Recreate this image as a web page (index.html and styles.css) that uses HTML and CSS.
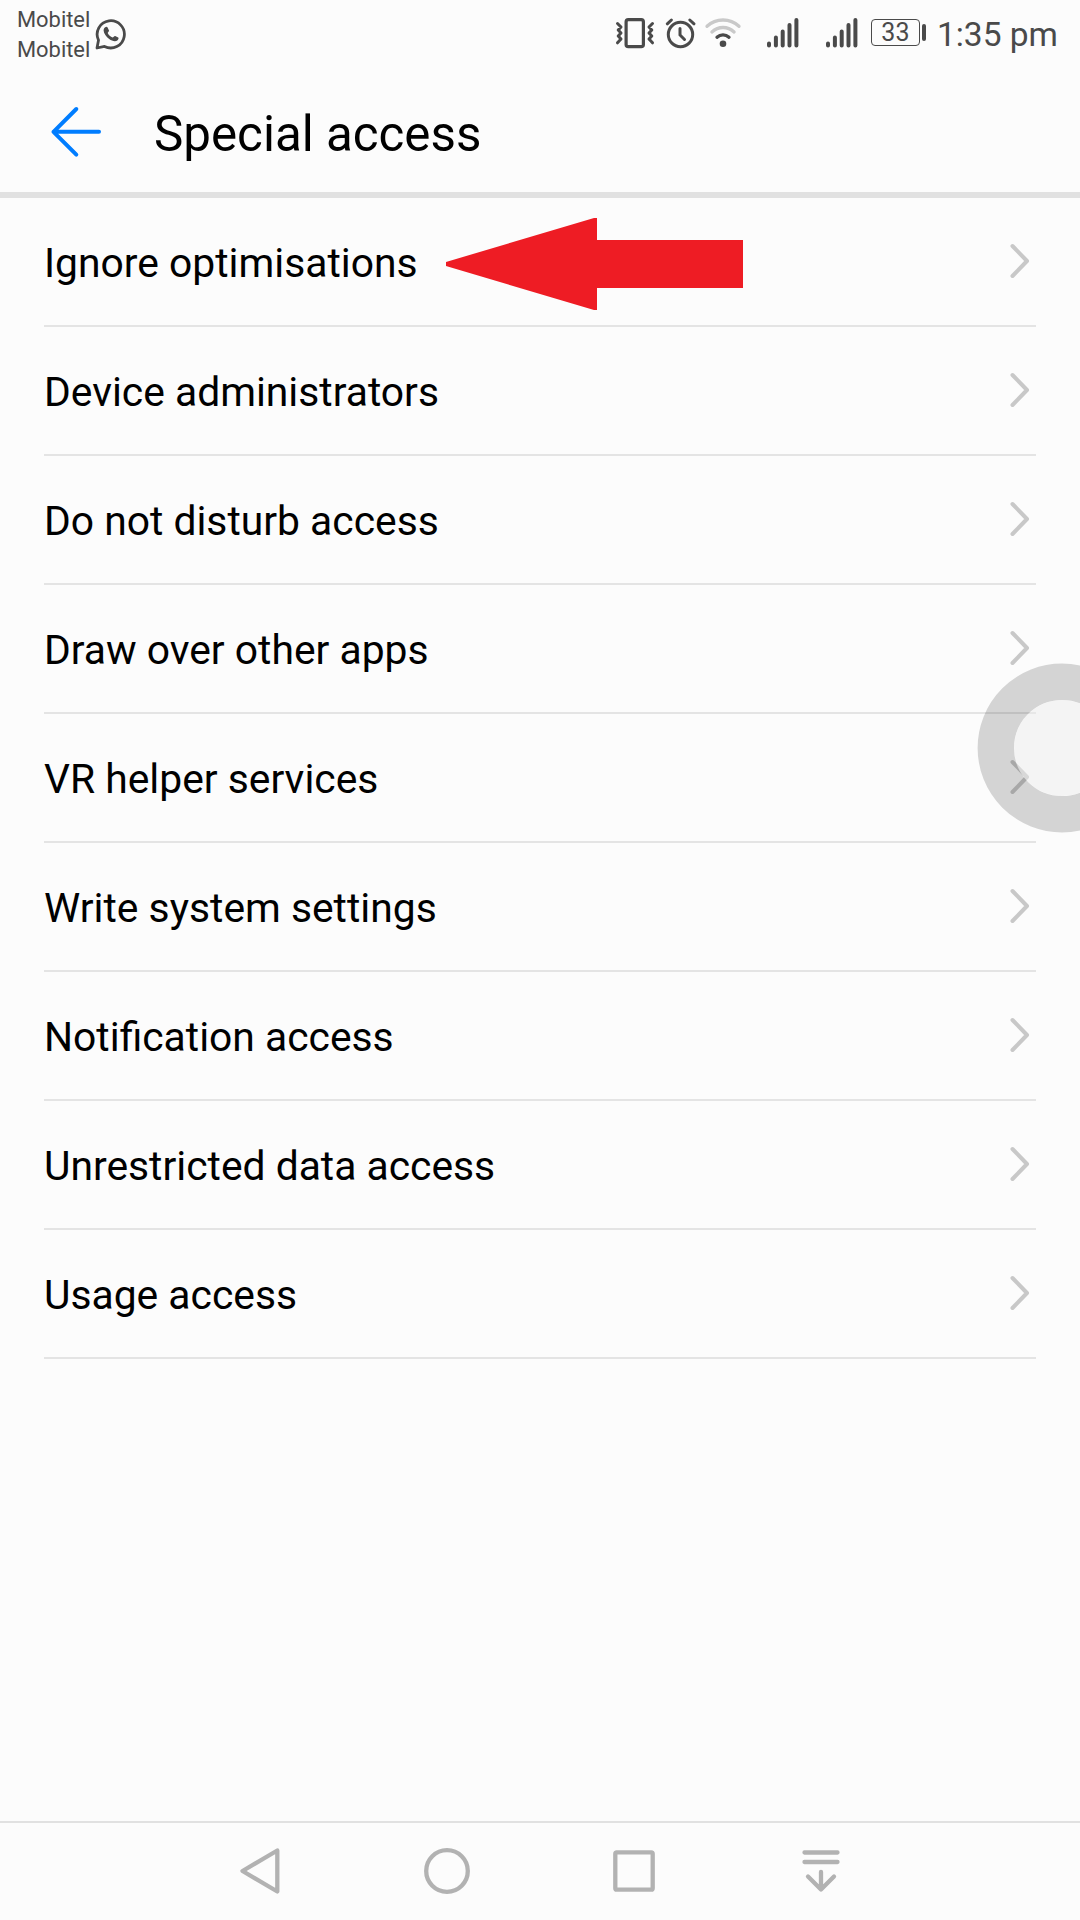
FILE: index.html
```html
<!DOCTYPE html>
<html lang="en">
<head>
<meta charset="utf-8">
<title>Special access</title>
<link rel="stylesheet" href="styles.css">
</head>
<body>
<div class="screen">
  <div class="status">
    <div class="carriers"><span>Mobitel</span><span>Mobitel</span></div>
    <svg class="whatsapp" width="32" height="32" viewBox="0 0 32 32">
      <path d="M2 30 3.5 22.2A13.6 13.6 0 1 1 9.5 28.4Z" fill="none" stroke="#4a4a4a" stroke-width="2.8" stroke-linejoin="round"/>
      <path d="M10.2 9.3C11 8.6 12.2 8.6 12.6 9.5L14 12.6C14.2 13.5 12.8 14.4 12.7 15C13.5 17 15.6 18.9 17.6 19.6C18.4 19.5 19.3 17.7 20.2 18L23.2 19.6C24 20.2 23.4 21.6 22.6 22.2C20.4 24 17 23 14.2 20.9C11.3 18.7 8.7 15.2 8.6 12.4C8.6 11.2 9.3 10 10.2 9.3Z" fill="#4a4a4a"/>
    </svg>
    <div class="indicators">
      <svg class="vibrate" width="40" height="32" viewBox="0 0 40 32" fill="none" stroke="#4a4a4a" stroke-linecap="round" stroke-linejoin="round">
        <rect x="11.1" y="2.6" width="17.3" height="27" rx="2.2" stroke-width="3.2"/>
        <path d="M2.5 6.5 6 10 3.2 13 6 16 3.2 19 6 22 2.5 25.8M37.5 6.5 34 10 36.8 13 34 16 36.8 19 34 22 37.5 25.8" stroke-width="3"/>
      </svg>
      <svg class="alarm" width="32" height="32" viewBox="0 0 32 32" fill="none" stroke="#4a4a4a" stroke-width="3" stroke-linecap="round">
        <circle cx="15.5" cy="17.5" r="12.2"/>
        <path d="M15 11.5V18L19.5 22.5"/>
        <path d="M2.3 6.8 6.4 3M24.8 3 29 6.8"/>
      </svg>
      <svg class="wifi" width="38" height="32" viewBox="0 0 38 32" fill="none" stroke-width="3.3" stroke-linecap="round">
        <path d="M3 9.3C12 .9 26 .9 35 9.3M7.9 15C14.5 9 23.5 9 30.1 15" stroke="#c9c9c9"/>
        <path d="M13 20.2C16.5 17 21.5 17 25 20.2" stroke="#4a4a4a"/>
        <circle cx="19" cy="26.7" r="3.3" fill="#4a4a4a"/>
      </svg>
      <svg class="signal" width="34" height="32" viewBox="0 0 34 32" stroke="#4a4a4a" stroke-width="4" stroke-linecap="round">
        <path d="M3 26.5V28.5M9.9 20.5V28.5M16.7 14.5V28.5M23.5 8V28.5M30.4 3V28.5"/>
      </svg>
      <svg class="signal signal-second" width="34" height="32" viewBox="0 0 34 32" stroke="#4a4a4a" stroke-width="4" stroke-linecap="round">
        <path d="M3 26.5V28.5M9.9 20.5V28.5M16.7 14.5V28.5M23.5 8V28.5M30.4 3V28.5"/>
      </svg>
      <div class="battery"><span class="level">33</span><span class="terminal"></span></div>
      <span class="time">1:35 pm</span>
    </div>
  </div>

  <header class="header">
    <svg class="back" width="52" height="52" viewBox="0 0 52 52" fill="none" stroke="#007dff" stroke-width="4" stroke-linecap="round" stroke-linejoin="round">
      <path d="M26.3 3 3.5 25.8 26.3 48.6M3.5 25.8H49"/>
    </svg>
    <h1 class="title">Special access</h1>
  </header>

  <main class="list">
    <div class="row"><span>Ignore optimisations</span>
      <svg class="pointer" width="298" height="92" viewBox="0 0 298 92"><path d="M0 45.5V48L148 92H151V70H297V22H151V0H148L0 44Z" fill="#ee1c24"/></svg>
      <svg class="chevron" width="20" height="36" viewBox="0 0 20 36"><path d="M2.5 3 17 18 2.5 33"/></svg></div>
    <div class="row"><span>Device administrators</span><svg class="chevron" width="20" height="36" viewBox="0 0 20 36"><path d="M2.5 3 17 18 2.5 33"/></svg></div>
    <div class="row"><span>Do not disturb access</span><svg class="chevron" width="20" height="36" viewBox="0 0 20 36"><path d="M2.5 3 17 18 2.5 33"/></svg></div>
    <div class="row"><span>Draw over other apps</span><svg class="chevron" width="20" height="36" viewBox="0 0 20 36"><path d="M2.5 3 17 18 2.5 33"/></svg></div>
    <div class="row"><span>VR helper services</span><svg class="chevron" width="20" height="36" viewBox="0 0 20 36"><path d="M2.5 3 17 18 2.5 33"/></svg></div>
    <div class="row"><span>Write system settings</span><svg class="chevron" width="20" height="36" viewBox="0 0 20 36"><path d="M2.5 3 17 18 2.5 33"/></svg></div>
    <div class="row"><span>Notification access</span><svg class="chevron" width="20" height="36" viewBox="0 0 20 36"><path d="M2.5 3 17 18 2.5 33"/></svg></div>
    <div class="row"><span>Unrestricted data access</span><svg class="chevron" width="20" height="36" viewBox="0 0 20 36"><path d="M2.5 3 17 18 2.5 33"/></svg></div>
    <div class="row"><span>Usage access</span><svg class="chevron" width="20" height="36" viewBox="0 0 20 36"><path d="M2.5 3 17 18 2.5 33"/></svg></div>
  </main>

  <nav class="navbar">
    <svg width="48" height="48" viewBox="0 0 48 48"><path d="M41.3 3.5 6.5 24 41.3 44.5Z"/></svg>
    <svg width="48" height="48" viewBox="0 0 48 48"><circle cx="24" cy="24" r="20.8"/></svg>
    <svg width="48" height="48" viewBox="0 0 48 48"><rect x="5.3" y="5.3" width="37.4" height="37.4" rx="1.5"/></svg>
    <svg width="48" height="48" viewBox="0 0 48 48"><path d="M7.5 5.5H40.5M7.5 15H40.5M24 25V42.5M11 29.5 24 42.5 37 29.5"/></svg>
  </nav>

  <svg class="float-button" width="103" height="170" viewBox="0 0 103 170">
    <circle cx="85" cy="85" r="66.2" fill="none" stroke="#000" stroke-opacity=".155" stroke-width="36.4"/>
    <circle cx="85" cy="85" r="48" fill="#ebebeb" fill-opacity=".46"/>
  </svg>
</div>
</body>
</html>
```
FILE: styles.css
```css
* { box-sizing: border-box; }

body {
  margin: 0;
  background: #fcfcfc;
  color: #000;
  font-family: Roboto, "Liberation Sans", sans-serif;
}

svg { display: block; flex: none; }

.screen {
  position: relative;
  display: flex;
  flex-direction: column;
  width: 1080px;
  height: 1920px;
  overflow: hidden;
}

.status {
  display: flex;
  align-items: flex-start;
  height: 72px;
  color: #4a4a4a;
}

.carriers {
  display: flex;
  flex-direction: column;
  width: 95px;
  padding: 5px 0 0 17px;
  font-size: 21.9px;
  line-height: 30px;
}

.whatsapp { margin-top: 18px; }

.indicators {
  display: flex;
  align-items: flex-start;
  margin-left: auto;
  padding: 17px 22px 0 0;
}

.alarm { margin-left: 10px; }
.wifi { margin-left: 7px; }
.signal { margin-left: 24px; }
.signal-second { margin-left: 25px; }

.battery {
  display: flex;
  align-items: center;
  gap: 2px;
  margin: 2px 11px 0 12px;
}

.level {
  width: 49px;
  height: 27px;
  border: 1.5px solid #4a4a4a;
  border-radius: 4px;
  font-size: 25px;
  line-height: 25px;
  text-align: center;
}

.terminal {
  width: 4px;
  height: 17px;
  border-radius: 2px;
  background: #4a4a4a;
}

.time {
  font-size: 33.5px;
  line-height: 36px;
}

.header {
  display: flex;
  align-items: flex-start;
  height: 126px;
  padding: 34px 50px 0;
  border-bottom: 6px solid #e1e1e1;
}

.title {
  margin: -2px 0 0 52px;
  font-size: 49.3px;
  font-weight: 400;
  line-height: 60px;
}

.list {
  flex: 1;
  padding: 0 44px;
}

.row {
  display: flex;
  align-items: center;
  height: 129px;
  padding: 2px 6px 0 0;
  border-bottom: 2px solid #e4e4e4;
  font-size: 40.8px;
  line-height: 50px;
}

.pointer { margin: 3px 0 0 28px; }

.chevron {
  margin: 0 0 3px auto;
  fill: none;
  stroke: #c8c8c8;
  stroke-width: 4;
  stroke-linecap: round;
  stroke-linejoin: round;
}

.navbar {
  display: flex;
  gap: 139px;
  height: 99px;
  padding: 24px 0 0 236px;
  border-top: 2px solid #e1e1e1;
  fill: none;
  stroke: #b2b2b2;
  stroke-width: 4.3;
  stroke-linecap: round;
  stroke-linejoin: round;
}

.float-button {
  position: absolute;
  top: 663px;
  right: 0;
}
```
